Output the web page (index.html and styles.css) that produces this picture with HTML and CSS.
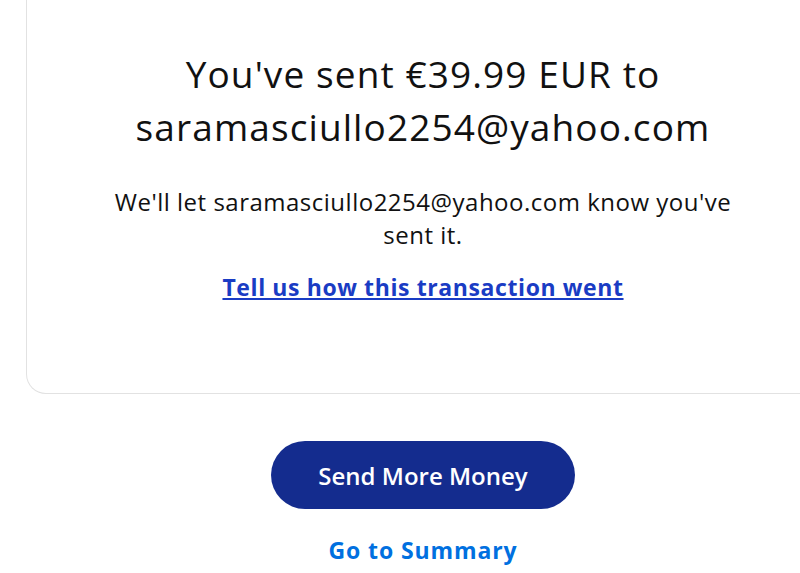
FILE: index.html
```html
<!DOCTYPE html>
<html>
<head>
<meta charset="utf-8">
<link rel="stylesheet" href="styles.css">
</head>
<body>
<div class="page">
  <section class="card">
    <h1 class="title">You've sent €39.99 EUR to saramasciullo2254@yahoo.com</h1>
    <p class="note">We'll let saramasciullo2254@yahoo.com know you've sent it.</p>
    <a class="feedback" href="#">Tell us how this transaction went</a>
  </section>
  <div class="actions">
    <button class="primary">Send More Money</button>
    <a class="summary" href="#">Go to Summary</a>
  </div>
</div>
</body>
</html>
```
FILE: styles.css
```css
html, body {
  margin: 0;
  padding: 0;
  background: #ffffff;
  overflow: hidden;
}
body {
  width: 800px;
  height: 573px;
  font-family: "Open Sans", Lato, sans-serif;
  color: #111111;
}
.page {
  display: flex;
  flex-direction: column;
  margin-left: 26px;
  width: 794px;
}
.card {
  box-sizing: border-box;
  border: 1px solid #e2e2e2;
  border-top: none;
  border-radius: 0 0 20px 20px;
  padding: 47px 40px 91px;
  display: flex;
  flex-direction: column;
  align-items: center;
  text-align: center;
}
.title {
  margin: 0;
  font-size: 37px;
  font-weight: 400;
  line-height: 53px;
  letter-spacing: 1.1px;
  width: 660px;
}
.note {
  margin: 32px 0 0;
  font-size: 24px;
  line-height: 33px;
  letter-spacing: 0.5px;
  width: 640px;
}
.feedback {
  margin-top: 21px;
  font-size: 23px;
  font-weight: 700;
  letter-spacing: 0.6px;
  color: #1a3cc4;
  text-decoration: underline;
  line-height: 30px;
}
.actions {
  display: flex;
  flex-direction: column;
  align-items: center;
  margin-top: 47px;
}
.primary {
  width: 304px;
  height: 68px;
  border: none;
  border-radius: 34px;
  background: #142c8e;
  color: #ffffff;
  font-family: "Open Sans", Lato, sans-serif;
  font-size: 24px;
  font-weight: 600;
}
.summary {
  margin-top: 26px;
  font-size: 23px;
  line-height: 30px;
  font-weight: 700;
  letter-spacing: 0.9px;
  color: #0070e0;
  text-decoration: none;
}
```
